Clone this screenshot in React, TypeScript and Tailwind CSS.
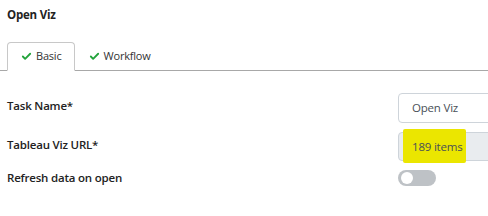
import React from 'react';
import { Check } from 'lucide-react';

const font = { fontFamily: '"Open Sans", "Noto Sans", sans-serif' };

const Tab = ({ label, active = false }: { label: string; active?: boolean }) => (
  <div
    className={
      active
        ? 'flex items-center gap-[4px] h-[29px] pl-[13px] pr-[12px] -mb-px border border-[#c8c8c8] border-b-white rounded-t-[4px] bg-white'
        : 'flex items-center gap-[4px] h-[29px] pl-[13px] pr-[12px] -mb-px border border-transparent'
    }
  >
    <Check className="w-[11px] h-[11px] text-[#22a33b]" strokeWidth={4} />
    <span className="text-[11px] text-[#333] tracking-[-0.2px]">{label}</span>
  </div>
);

export default function App() {
  return (
    <div className="w-[488px] h-[216px] overflow-hidden bg-white text-[#222]" style={font}>
      <div className="pl-[7px] pt-[7px] text-[11.5px] font-bold leading-[16px] tracking-[-0.2px]">Open Viz</div>

      <div className="mt-[19px] pl-[7px] flex border-b border-[#a8a8a8]">
        <Tab label="Basic" active />
        <Tab label="Workflow" />
      </div>

      <div className="pl-[7px] mt-[22px] flex flex-col text-[11.5px] tracking-[-0.2px]">
        <div className="flex items-center h-[30px]">
          <div className="w-[391px] shrink-0 font-semibold -mt-[4px]">Task Name*</div>
          <div className="w-[120px] shrink-0 h-[30px] border border-[#ced4da] rounded-[4px] bg-white flex items-center pl-[13px] text-[#495057]">
            Open Viz
          </div>
        </div>

        <div className="flex items-center h-[29px] mt-[9px]">
          <div className="w-[391px] shrink-0 font-semibold -mt-[4px]">Tableau Viz URL*</div>
          <div className="relative w-[120px] shrink-0 h-[29px] border border-[#ced4da] rounded-[4px] bg-[#e9ecef] flex items-center pl-[13px] text-[#495057]">
            <div className="absolute left-[4px] -top-[4px] w-[63px] h-[34px] bg-[#ebe600] rounded-[2px]" />
            <span className="relative">189 items</span>
          </div>
        </div>

        <div className="flex items-center h-[16px] mt-[9px]">
          <div className="w-[391px] shrink-0 font-semibold">Refresh data on open</div>
          <div className="w-[38px] h-[16px] rounded-full bg-[#bec2c6] flex items-center pl-[3px] shrink-0">
            <div className="w-[12px] h-[12px] rounded-full bg-white" />
          </div>
        </div>
      </div>
    </div>
  );
}
